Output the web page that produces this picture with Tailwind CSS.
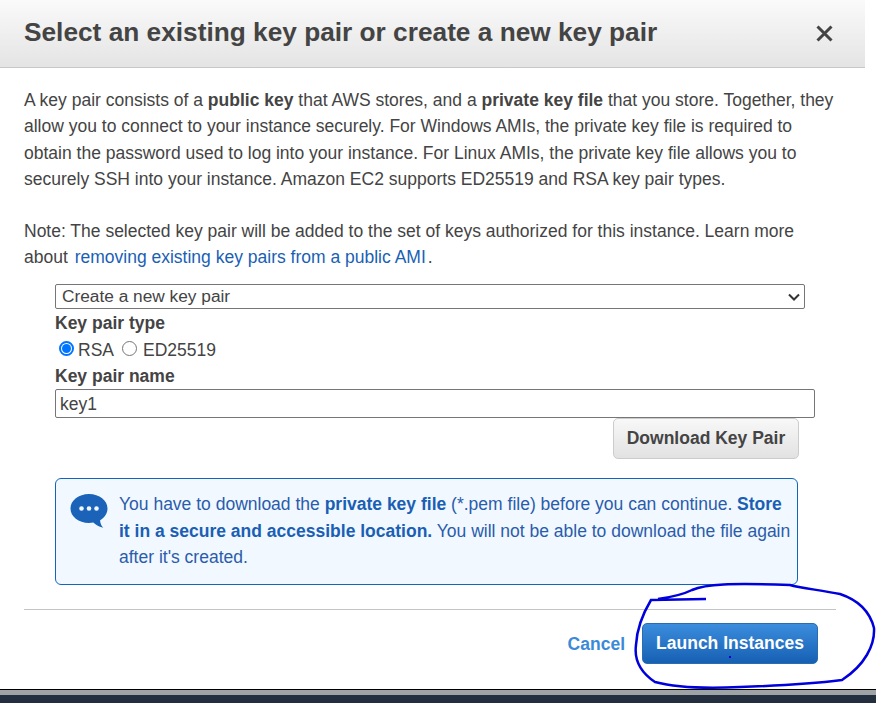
<!DOCTYPE html>
<html lang="en">
<head>
<meta charset="UTF-8">
<meta name="viewport" content="width=device-width, initial-scale=1.0">
<title>Select key pair</title>
<script src="https://cdn.jsdelivr.net/npm/@tailwindcss/browser@4"></script>
</head>
<body class="relative h-[703px] w-[876px] overflow-hidden bg-white font-['Liberation_Sans',Arial,sans-serif] text-[#444]">

<div class="flex h-[689px] w-[865px] flex-col bg-white">
  <div class="flex h-[68px] shrink-0 items-center justify-between border-b border-[#c8c8c8] bg-gradient-to-b from-[#fafafa] to-[#e4e4e4] pr-[32px] pl-6">
    <h1 class="-mt-[2px] text-[26.25px] font-bold text-[#444]">Select an existing key pair or create a new key pair</h1>
    <svg class="h-[17px] w-[17px]" viewBox="0 0 17 17" fill="none" stroke="#444" stroke-width="3"><path d="M1.500 1.500 15.500 15.500M15.500 1.500 1.500 15.500"/></svg>
  </div>

  <div class="px-6 pt-[19px] text-[17.5px] leading-[26.4px]">
    <p>A key pair consists of a <b>public key</b> that AWS stores, and a <b>private key file</b> that you store. Together, they allow you to connect to your instance securely. For Windows AMIs, the private key file is required to obtain the password used to log into your instance. For Linux AMIs, the private key file allows you to securely SSH into your instance. Amazon EC2 supports ED25519 and RSA key pair types.</p>
    <p class="mt-[25px]">Note: The selected key pair will be added to the set of keys authorized for this instance. Learn more about <a class="mx-[2px] text-[#1a5fb4]">removing existing key pairs from a public AMI</a>.</p>

    <div class="ml-[31px] mt-[14px]">
      <div class="flex h-[25px] w-[750px] items-center justify-between rounded-[2px] border border-[#767676] pr-[4px] pl-[6px] text-[17.3px]">
        <span class="-mt-[2px]">Create a new key pair</span>
        <svg class="h-[8px] w-[12px]" viewBox="0 0 12 8" fill="none" stroke="#333" stroke-width="2"><path d="M1 1.500 6 6.500 11 1.500"/></svg>
      </div>
      <div class="mt-[1px] font-bold leading-[26px]">Key pair type</div>
      <div class="flex h-[27px] items-center pl-1">
        <span class="-mt-[3px] flex h-[15px] w-[15px] items-center justify-center rounded-full border-2 border-[#0075ff]"><span class="h-[9px] w-[9px] rounded-full bg-[#0075ff]"></span></span>
        <span class="ml-[4px]">RSA</span>
        <span class="-mt-[3px] ml-[8px] h-[15px] w-[15px] rounded-full border border-[#767676]"></span>
        <span class="ml-[6px]">ED25519</span>
      </div>
      <div class="font-bold leading-[26px]">Key pair name</div>
      <div class="flex h-[29px] w-[760px] items-center rounded-[2px] border border-[#767676] pl-1">key1</div>
      <div class="flex w-[744px] justify-end">
        <div class="flex h-[41px] w-[186px] items-center justify-center rounded-[5px] border border-[#ccc] bg-gradient-to-b from-[#f8f8f8] to-[#e2e2e2] pb-[2px] font-bold">Download Key Pair</div>
      </div>
      <div class="mt-[19px] flex h-[107px] w-[743px] rounded-[6px] border border-[#1166bb] bg-[#f1f8ff] pt-[12px] pl-[14px] text-[#2a5cab]">
        <svg class="mt-[2px] h-[36px] w-[38px] shrink-0" viewBox="0 0 38 36"><path fill="#1a63b8" d="M19 1C8.500 1 .5 7.500.5 15.500S8.500 30 19 30c1.500 0 3-.1 4.300-.4 2.200 2 5.200 4.200 10 5.200-2-2-3-4-3.200-7.500C34.500 24.500 37.500 20.500 37.500 15.500 37.500 7.500 29.500 1 19 1Z"/><circle cx="11.500" cy="15.500" r="2.300" fill="#f1f8ff"/><circle cx="19" cy="15.500" r="2.300" fill="#f1f8ff"/><circle cx="26.500" cy="15.500" r="2.300" fill="#f1f8ff"/></svg>
        <p class="ml-[11px]">You have to download the <b class="text-[#1a5fb4]">private key file</b> (*.pem file) before you can continue. <b class="text-[#1a5fb4]">Store it in a secure and accessible location.</b> You will not be able to download the file again after it's created.</p>
      </div>
    </div>
  </div>

  <div class="mt-[24px] mr-[29px] ml-6 border-t border-[#c4c4c4]"></div>
  <div class="flex items-center justify-end pt-[13px] pr-[47px] text-[17.5px]">
    <a class="mr-[17px] font-bold text-[#3b8ad9]">Cancel</a>
    <div class="flex h-[41px] w-[176px] items-center justify-center rounded-[5px] border border-[#2b6cb0] bg-gradient-to-b from-[#3b8ddd] to-[#1660b4] pb-[1px] font-bold text-white">Launch Instances</div>
  </div>
</div>

<div class="h-[14px] border-t border-black bg-[#9ea3a6]"><div class="mt-[5px] h-[9px] bg-[#232f3e]"></div></div>

<svg class="absolute top-[580px] left-[630px]" width="246" height="112" viewBox="630 580 246 112" fill="none" stroke="#0000dd" stroke-width="2.500"><path d="M658 599 C672 597 684 594 692 590 C706 584 730 583 790 585 C800 588 820 590 840 594 C858 600 870 612 874 628 C875 645 865 665 842 680 C810 684 770 686 740 687 C700 689 670 686 655 682 C640 672 634 660 636 645 C637 625 645 610 651 600 L706 599"/></svg>
<span class="absolute top-[656px] left-[729px] h-[2px] w-[2px] bg-[#0000dd]"></span>

</body>
</html>
